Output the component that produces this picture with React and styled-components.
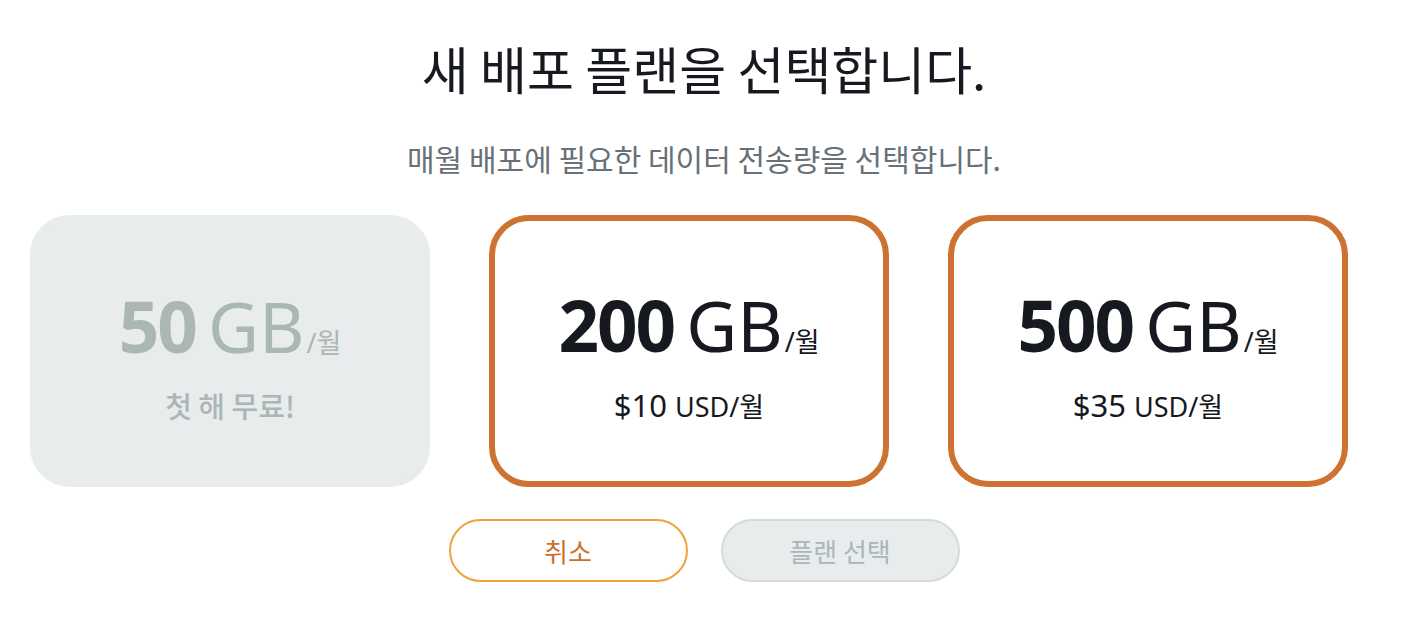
import React from "react";
import styled, { createGlobalStyle } from "styled-components";

const Global = createGlobalStyle`
  html, body { margin: 0; padding: 0; background: #ffffff; }
  body { font-family: "Noto Sans", "Noto Sans CJK KR", sans-serif; }
  * { box-sizing: border-box; }
`;

const Page = styled.div`
  width: 1408px;
  height: 638px;
  padding-top: 38px;
  display: flex;
  flex-direction: column;
  align-items: center;
`;

const Title = styled.h1`
  margin: 0;
  font-family: "Noto Sans CJK KR", sans-serif;
  font-weight: 400;
  font-size: 51px;
  line-height: 60px;
  color: #16191f;
  text-align: center;
`;

const Subtitle = styled.p`
  margin: 42px 0 0;
  font-family: "Noto Sans CJK KR", sans-serif;
  font-weight: 400;
  font-size: 30px;
  line-height: 36px;
  color: #687078;
  text-align: center;
`;

const Cards = styled.div`
  align-self: stretch;
  display: flex;
  gap: 59px;
  padding-left: 30px;
  margin-top: 39px;
`;

const Card = styled.div`
  width: 400px;
  height: 272px;
  border-radius: 40px;
  display: flex;
  flex-direction: column;
  align-items: center;
  justify-content: center;
  padding-top: 8px;
  background: ${(p) => (p.$disabled ? "#e9eced" : "#ffffff")};
  border: 6px solid ${(p) => (p.$disabled ? "#e9eced" : "#cd7230")};
  color: ${(p) => (p.$disabled ? "#aab7b4" : "#16191f")};
`;

const Amount = styled.div`
  display: flex;
  align-items: baseline;
  line-height: 1;
  font-family: "Noto Sans", "Noto Sans CJK KR", sans-serif;
`;

const Number = styled.span`
  font-size: 71px;
  font-weight: 700;
  letter-spacing: -2px;
`;

const Unit = styled.span`
  font-size: 70px;
  font-weight: 400;
  margin-left: 12px;
`;

const Per = styled.span`
  font-size: 27px;
  font-family: "Noto Sans", "Noto Sans CJK KR", sans-serif;
  margin-left: 2px;
`;

const Price = styled.div`
  margin-top: 30px;
  display: flex;
  align-items: baseline;
  line-height: 1;
  font-family: "Noto Sans", "Noto Sans CJK KR", sans-serif;
`;

const PriceValue = styled.span`
  font-size: 31px;
`;

const PriceUnit = styled.span`
  font-size: 27px;
  margin-left: 8px;
`;

const Free = styled.div`
  margin-top: 30px;
  font-family: "Noto Sans CJK KR", sans-serif;
  font-size: 29px;
  font-weight: 500;
  line-height: 1;
`;

const Actions = styled.div`
  display: flex;
  gap: 33px;
  margin-top: 32px;
`;

const Button = styled.button`
  width: 239px;
  height: 63px;
  border-radius: 32px;
  font-family: "Noto Sans CJK KR", sans-serif;
  font-size: 26px;
  font-weight: 400;
  cursor: pointer;
  background: ${(p) => (p.$primary ? "#e9eced" : "#ffffff")};
  border: 2px solid ${(p) => (p.$primary ? "#d5dbdb" : "#f0a23c")};
  color: ${(p) => (p.$primary ? "#aab7b8" : "#cc6f2d")};
`;

const plans = [
  { size: "50", free: true },
  { size: "200", price: "$10" },
  { size: "500", price: "$35" },
];

export default function App() {
  return (
    <>
      <Global />
      <Page>
        <Title>새 배포 플랜을 선택합니다.</Title>
        <Subtitle>매월 배포에 필요한 데이터 전송량을 선택합니다.</Subtitle>
        <Cards>
          {plans.map((p) => (
            <Card key={p.size} $disabled={p.free}>
              <Amount>
                <Number>{p.size}</Number>
                <Unit>GB</Unit>
                <Per>/월</Per>
              </Amount>
              {p.free ? (
                <Free>첫 해 무료!</Free>
              ) : (
                <Price>
                  <PriceValue>{p.price}</PriceValue>
                  <PriceUnit>USD/월</PriceUnit>
                </Price>
              )}
            </Card>
          ))}
        </Cards>
        <Actions>
          <Button>취소</Button>
          <Button $primary>플랜 선택</Button>
        </Actions>
      </Page>
    </>
  );
}
